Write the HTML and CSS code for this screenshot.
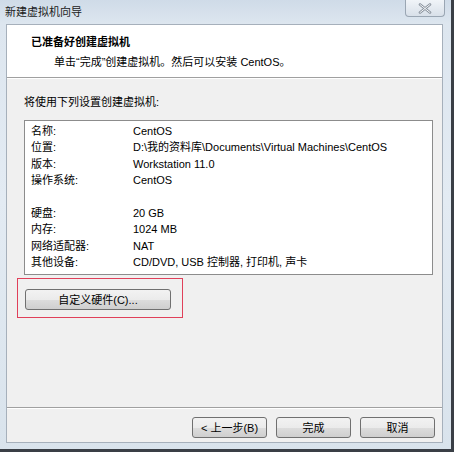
FILE: index.html
```html
<!DOCTYPE html>
<html>
<head>
<meta charset="utf-8">
<link rel="stylesheet" href="styles.css">
</head>
<body>
<div class="window">
  <div class="titlebar">
    <span class="title">新建虚拟机向导</span>
    <div class="close">
      <svg width="14" height="11" viewBox="0 0 14 11"><path d="M2 1.5 L12 9.5 M12 1.5 L2 9.5" stroke="#8a939e" stroke-width="2.6" stroke-linecap="round" fill="none"/><path d="M2 1.5 L12 9.5 M12 1.5 L2 9.5" stroke="#f4f6f8" stroke-width="1" stroke-linecap="round" fill="none"/></svg>
    </div>
  </div>
  <div class="client">
    <div class="header">
      <div class="h-title">已准备好创建虚拟机</div>
      <div class="h-sub">单击“完成”创建虚拟机。然后可以安装 CentOS。</div>
    </div>
    <div class="body">
      <div class="intro">将使用下列设置创建虚拟机:</div>
      <div class="listbox">
        <div class="row"><span class="k">名称:</span><span class="v">CentOS</span></div>
        <div class="row"><span class="k">位置:</span><span class="v">D:\我的资料库\Documents\Virtual Machines\CentOS</span></div>
        <div class="row"><span class="k">版本:</span><span class="v">Workstation 11.0</span></div>
        <div class="row"><span class="k">操作系统:</span><span class="v">CentOS</span></div>
        <div class="row"></div>
        <div class="row"><span class="k">硬盘:</span><span class="v">20 GB</span></div>
        <div class="row"><span class="k">内存:</span><span class="v">1024 MB</span></div>
        <div class="row"><span class="k">网络适配器:</span><span class="v">NAT</span></div>
        <div class="row"><span class="k">其他设备:</span><span class="v">CD/DVD, USB 控制器, 打印机, 声卡</span></div>
      </div>
      <div class="highlight">
        <div class="btn btn-wide">自定义硬件(C)...</div>
      </div>
    </div>
    <div class="footer">
      <div class="btn">&lt; 上一步(B)</div>
      <div class="btn">完成</div>
      <div class="btn">取消</div>
    </div>
  </div>
</div>
</body>
</html>
```

FILE: styles.css
```css
html, body {
  margin: 0;
  padding: 0;
}
body {
  width: 454px;
  height: 452px;
  overflow: hidden;
  background: #dfe7ef;
  font-family: "Liberation Sans", "Noto Sans CJK SC", sans-serif;
  font-size: 11px;
  color: #000;
}
.window {
  width: 454px;
  height: 452px;
  box-sizing: border-box;
  padding: 0 8px 6px 6px;
  background: linear-gradient(180deg, #cfdbe8 0px, #dde6ef 24px, #e3ebf3 200px, #d9e3ec 452px);
  border-right: 3px solid #3a3f46;
  border-bottom: 3px solid #3a3f46;
  display: flex;
  flex-direction: column;
}
.titlebar {
  height: 24px;
  display: flex;
  justify-content: space-between;
  align-items: flex-start;
}
.title {
  margin-top: 4px;
  margin-left: -1px;
  color: #1a1a1a;
  line-height: 16px;
}
.close {
  width: 40px;
  height: 17px;
  margin-right: -2px;
  box-sizing: border-box;
  border: 1px solid #9aa6b3;
  border-top: none;
  border-radius: 0 0 4px 4px;
  background: linear-gradient(180deg, #f0f4f8, #d8e0e9);
  display: flex;
  align-items: center;
  justify-content: center;
}
.client {
  flex: 1;
  background: #f0f0f0;
  border: 1px solid #a6b0bb;
  display: flex;
  flex-direction: column;
}
.header {
  height: 53px;
  background: #fff;
  border-bottom: 1px solid #a0a0a0;
  box-shadow: 0 1px 0 #fff;
  box-sizing: border-box;
  padding: 9px 0 0 24px;
}
.h-title {
  font-weight: bold;
  line-height: 16px;
}
.h-sub {
  margin-top: 4px;
  padding-left: 23px;
  line-height: 16px;
}
.body {
  flex: 1;
  padding: 16px 9px 0 17px;
}
.intro {
  line-height: 16px;
}
.listbox {
  margin-top: 10px;
  height: 155px;
  box-sizing: border-box;
  background: #fff;
  border: 1px solid #8c8c8c;
  padding: 2px 0 0 6px;
}
.row {
  height: 16.4px;
  line-height: 16px;
  display: flex;
}
.k {
  width: 102px;
}
.highlight {
  margin: 3px 0 0 -7px;
  width: 166px;
  height: 40px;
  box-sizing: border-box;
  border: 1px solid #e0405a;
  padding: 10px 0 0 7px;
}
.btn {
  width: 75px;
  height: 21px;
  box-sizing: border-box;
  border: 1px solid #707070;
  border-radius: 3px;
  background: linear-gradient(180deg, #f2f2f2 0%, #ebebeb 50%, #dddddd 51%, #cfcfcf 100%);
  display: flex;
  align-items: center;
  justify-content: center;
  line-height: 14px;
}
.btn-wide {
  width: 146px;
}
.footer {
  height: 35px;
  border-top: 1px solid #a0a0a0;
  box-shadow: inset 0 1px 0 #fff;
  display: flex;
  justify-content: flex-end;
  gap: 9px;
  padding: 9px 7px 0 0;
  box-sizing: border-box;
}
```
